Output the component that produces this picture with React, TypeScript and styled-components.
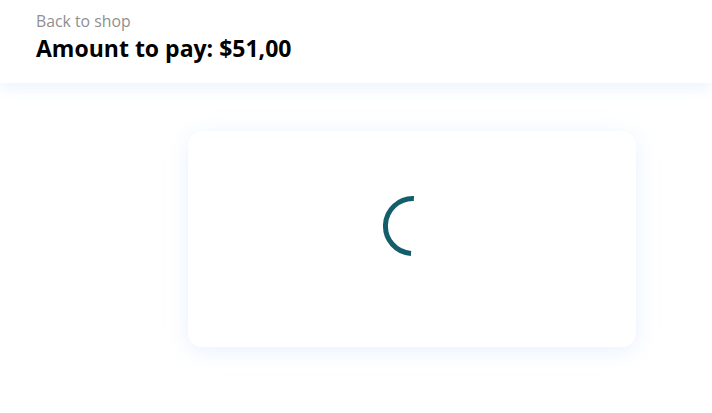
import React from "react";
import styled, { createGlobalStyle } from "styled-components";

const Global = createGlobalStyle`
  html, body { margin: 0; padding: 0; background: #ffffff; }
  body { font-family: "Open Sans", Lato, sans-serif; }
`;

const Page = styled.div`
  min-height: 413px;
  background: #ffffff;
`;

const Header = styled.header`
  height: 83px;
  box-sizing: border-box;
  padding: 10px 36px 0;
  background: #ffffff;
  box-shadow: 0 6px 14px rgba(215, 232, 255, 0.45);
  position: relative;
  z-index: 1;
`;

const BackLink = styled.a`
  display: block;
  font-size: 15.8px;
  line-height: 22px;
  color: #8f8f8f;
  text-decoration: none;
`;

const Title = styled.h1`
  margin: 1px 0 0;
  font-size: 23px;
  line-height: 30px;
  font-weight: 700;
  color: #000000;
`;

const Main = styled.main`
  display: flex;
  padding: 48px 76px 0 188px;
`;

const Card = styled.section`
  width: 448px;
  box-sizing: border-box;
  height: 216px;
  padding-top: 65px;
  display: flex;
  justify-content: center;
  align-items: flex-start;
  border-radius: 14px;
  background: #ffffff;
  box-shadow: 0 4px 22px rgba(190, 215, 255, 0.35);
`;

const SpinnerSvg = styled.svg`
  display: block;
  width: 60px;
  height: 60px;
  flex: none;
`;

const Spinner: React.FC = () => {
  const cx = 30;
  const cy = 30;
  const r = 27.5;
  const a1 = (4 * Math.PI) / 180;
  const a2 = (182 * Math.PI) / 180;
  const x1 = cx + r * Math.sin(a1);
  const y1 = cy - r * Math.cos(a1);
  const x2 = cx + r * Math.sin(a2);
  const y2 = cy - r * Math.cos(a2);
  return (
    <SpinnerSvg viewBox="0 0 60 60" aria-label="Loading">
      <path
        d={`M ${x1} ${y1} A ${r} ${r} 0 0 0 ${x2} ${y2}`}
        fill="none"
        stroke="#135e6a"
        strokeWidth={5}
        strokeLinecap="butt"
      />
    </SpinnerSvg>
  );
};

export default function App() {
  return (
    <Page>
      <Global />
      <Header>
        <BackLink href="#">Back to shop</BackLink>
        <Title>Amount to pay: $51,00</Title>
      </Header>
      <Main>
        <Card>
          <Spinner />
        </Card>
      </Main>
    </Page>
  );
}
